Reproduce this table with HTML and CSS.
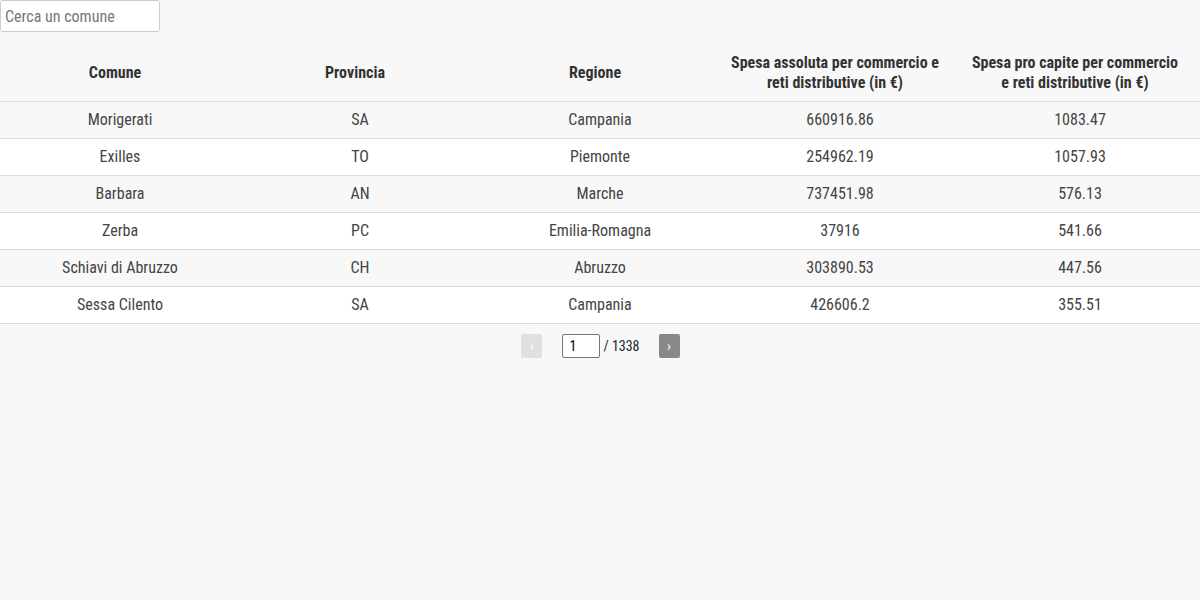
FILE: index.html
```html
<!DOCTYPE html>
<html lang="it">
<head>
<meta charset="utf-8">
<link rel="stylesheet" href="styles.css">
</head>
<body>
<div class="app">
  <input class="search" type="text" placeholder="Cerca un comune">
  <table class="data">
    <thead>
      <tr>
        <th>Comune</th>
        <th>Provincia</th>
        <th>Regione</th>
        <th>Spesa assoluta per commercio e reti distributive (in €)</th>
        <th>Spesa pro capite per commercio e reti distributive (in €)</th>
      </tr>
    </thead>
    <tbody>
      <tr><td>Morigerati</td><td>SA</td><td>Campania</td><td>660916.86</td><td>1083.47</td></tr>
      <tr><td>Exilles</td><td>TO</td><td>Piemonte</td><td>254962.19</td><td>1057.93</td></tr>
      <tr><td>Barbara</td><td>AN</td><td>Marche</td><td>737451.98</td><td>576.13</td></tr>
      <tr><td>Zerba</td><td>PC</td><td>Emilia-Romagna</td><td>37916</td><td>541.66</td></tr>
      <tr><td>Schiavi di Abruzzo</td><td>CH</td><td>Abruzzo</td><td>303890.53</td><td>447.56</td></tr>
      <tr><td>Sessa Cilento</td><td>SA</td><td>Campania</td><td>426606.2</td><td>355.51</td></tr>
    </tbody>
  </table>
  <div class="pager">
    <button class="pg-btn disabled">‹</button>
    <input class="pg-input" type="text" value="1">
    <span class="pg-total">/ 1338</span>
    <button class="pg-btn active">›</button>
  </div>
</div>
</body>
</html>
```

FILE: styles.css
```css
html, body {
  margin: 0;
  padding: 0;
  background: #f8f8f8;
}
body {
  font-family: "Roboto Condensed", Roboto, "Liberation Sans", sans-serif;
  font-stretch: condensed;
  color: #333;
}
.app {
  display: flex;
  flex-direction: column;
}
.search {
  box-sizing: border-box;
  width: 160px;
  height: 32px;
  margin: 0 0 10px 0;
  padding: 0 4px;
  border: 1px solid #ccc;
  border-radius: 3px;
  background: #fff;
  font-family: inherit;
  font-stretch: condensed;
  font-size: 16px;
  color: #333;
}
.search::placeholder {
  color: #777;
}
.data {
  width: 100%;
  border-collapse: collapse;
  table-layout: fixed;
}
.data th {
  font-weight: bold;
  font-size: 16px;
  line-height: 20px;
  padding: 11px 20px 8px 10px;
  text-align: center;
  color: #333;
  border-bottom: 1px solid #ddd;
}
.data td {
  font-size: 16px;
  line-height: 20px;
  padding: 8px 10px;
  text-align: center;
  color: #444;
  border-bottom: 1px solid #ddd;
}
.data tbody tr:nth-child(odd) {
  background: #f8f8f8;
}
.data tbody tr:nth-child(even) {
  background: #fff;
}
.pager {
  display: flex;
  justify-content: center;
  align-items: center;
  margin-top: 10px;
  padding-left: 1px;
  font-size: 14px;
}
.pg-btn {
  width: 21px;
  height: 24px;
  border: none;
  border-radius: 2px;
  padding: 0;
  font-size: 14px;
  font-family: inherit;
  color: #fff;
}
.pg-btn.disabled {
  background: #e0e0e0;
  color: #fff;
}
.pg-btn.active {
  background: #888;
}
.pg-input {
  box-sizing: border-box;
  width: 38px;
  height: 24px;
  margin-left: 20px;
  padding: 0 6px;
  border: 1px solid #777;
  border-radius: 2px;
  background: #fff;
  font-family: inherit;
  font-stretch: condensed;
  font-size: 14px;
  color: #000;
}
.pg-total {
  margin: 0 19px 0 3px;
  color: #222;
}
```
